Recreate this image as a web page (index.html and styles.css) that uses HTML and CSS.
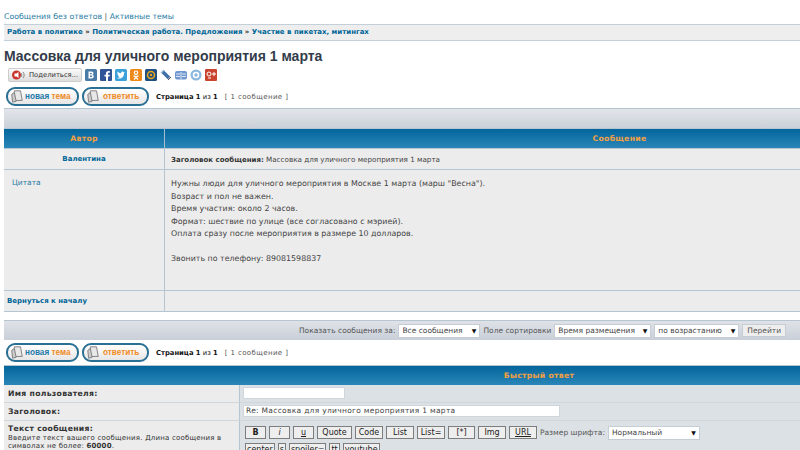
FILE: index.html
```html
<!DOCTYPE html>
<html lang="ru">
<head>
  <meta charset="UTF-8">
  <title>Массовка для уличного мероприятия 1 марта</title>
  <link rel="stylesheet" href="styles.css">
</head>
<body>
<div class="page">
  <div class="toplinks"><a href="#">Сообщения без ответов</a> | <a href="#">Активные темы</a></div>
  <div class="crumbs"><a href="#">Работа в политике</a> <span>»</span> <a href="#">Политическая работа. Предложения</a> <span>»</span> <a href="#">Участие в пикетах, митингах</a></div>
  <h1>Массовка для уличного мероприятия 1 марта</h1>

  <div class="share">
    <div class="share-btn">
      <svg width="16" height="12" viewBox="0 0 16 12"><ellipse cx="5.5" cy="6" rx="4.5" ry="4.5" fill="#c8342c"/><path d="M3.5 4.5h2l2-1.5v6l-2-1.500h-2z" fill="#fff"/><path d="M10 4c1 1 1 3 0 4M12 3c1.500 1.500 1.500 4.500 0 6" stroke="#888" fill="none"/></svg>
      <span>Поделиться...</span>
    </div>
    <svg class="soc" viewBox="0 0 12 12"><rect width="12" height="12" rx="1.500" fill="#4a7ba7"/><path d="M3.500 2.500h3c2.500 0 2.500 3 .8 3.300 2.200.3 2 3.700-.8 3.700h-3zM5 4v1.300h1.300c.8 0 .8-1.300 0-1.300zM5 6.500V8h1.500c1 0 1-1.500 0-1.500z" fill="#fff"/></svg>
    <svg class="soc" viewBox="0 0 12 12"><rect width="12" height="12" rx="1" fill="#2f5597"/><path d="M8 12V7.500h1.500L9.800 5.700H8V4.600c0-.6.2-.9.9-.9h.9V2.100H8.500C6.800 2.100 6 3 6 4.400v1.300H4.500v1.800H6V12z" fill="#fff"/></svg>
    <svg class="soc" viewBox="0 0 12 12"><rect width="12" height="12" rx="1.500" fill="#3ba1d8"/><path d="M2 9c3 1.500 7 0 7-5l1-1-1.300.2C8 2 6 2.500 6 4.200 4.500 4.200 3.500 3.500 2.500 2.500c-.5 1 0 2 .7 2.500l-.8-.2c0 1 .7 1.700 1.500 2l-.7.100c.3.700 1 1 1.600 1.100C4 8.600 3 9 2 9z" fill="#fff"/></svg>
    <svg class="soc" viewBox="0 0 12 12"><rect width="12" height="12" rx="1.500" fill="#ee8a1c"/><circle cx="6" cy="3.700" r="1.700" fill="none" stroke="#fff" stroke-width="1.200"/><path d="M3.500 6.800c1.500 1 3.500 1 5 0M6 7.500v1M6 8.500L4 10.500M6 8.500l2 2" stroke="#fff" stroke-width="1.200" fill="none"/></svg>
    <svg class="soc" viewBox="0 0 12 12"><rect width="12" height="12" rx="1.500" fill="#1e4f80"/><circle cx="6" cy="6" r="3.500" fill="none" stroke="#e8a41c" stroke-width="1.500"/><circle cx="6" cy="6" r="1.200" fill="#e8a41c"/></svg>
    <svg class="soc" viewBox="0 0 12 12"><path d="M2.500 2.500L9 9" stroke="#3f6fa8" stroke-width="3.500"/><path d="M1 4l3-3" stroke="#9db8d4" stroke-width="1.500"/><path d="M8 11l3-3" stroke="#555"/></svg>
    <svg class="soc" viewBox="0 0 12 12"><rect y="2" width="12" height="8.500" rx="2" fill="#6f96cf"/><path d="M1 5h4M1 7.500h4M7 5h4M7 7.500h4M6 3v7" stroke="#dfe8f4"/></svg>
    <svg class="soc" viewBox="0 0 12 12"><circle cx="6" cy="6" r="5.500" fill="#8ab8de"/><circle cx="6" cy="6" r="2.500" fill="none" stroke="#fff" stroke-width="1.500"/></svg>
    <svg class="soc" viewBox="0 0 12 12"><rect width="12" height="12" rx="1" fill="#c9452f"/><circle cx="4" cy="5" r="2" fill="none" stroke="#fff"/><path d="M3 9h3M9 3v4M7 5h4" stroke="#fff"/></svg>
  </div>

  <div class="actions">
    <a class="pill pill-new" href="#">
      <svg width="14" height="15" viewBox="0 0 16 15"><path d="M5 1h7l2 11H4z" fill="#e8e8e8" stroke="#777"/><path d="M2 5l3-2 2 10-4 1z" fill="#ccc" stroke="#777"/></svg>
      <span><b class="blue">новая</b> <b class="orange">тема</b></span>
    </a>
    <a class="pill pill-reply" href="#">
      <svg width="14" height="15" viewBox="0 0 16 15"><path d="M5 1h7l2 11H4z" fill="#e8e8e8" stroke="#777"/><path d="M2 5l3-2 2 10-4 1z" fill="#ccc" stroke="#777"/></svg>
      <b class="orange">ответить</b>
    </a>
    <span class="pages"><b>Страница 1</b> из <b>1</b></span>
    <span class="count">[ 1 сообщение ]</span>
  </div>

  <div class="band"></div>
  <div class="post">
    <div class="head head-left">Автор</div>
    <div class="head">Сообщение</div>
    <div class="cell author"><a href="#">Валентина</a></div>
    <div class="cell subject"><b>Заголовок сообщения:</b> Массовка для уличного мероприятия 1 марта</div>
    <div class="cell side"><a href="#">Цитата</a></div>
    <div class="cell body-text">
      <p>Нужны люди для уличного мероприятия в Москве 1 марта (марш "Весна").</p>
      <p>Возраст и пол не важен.</p>
      <p>Время участия: около 2 часов.</p>
      <p>Формат: шествие по улице (все согласовано с мэрией).</p>
      <p>Оплата сразу после мероприятия в размере 10 долларов.</p>
      <p>&nbsp;</p>
      <p>Звонить по телефону: 89081598837</p>
    </div>
    <div class="cell back"><a href="#">Вернуться к началу</a></div>
    <div class="cell empty"></div>
  </div>

  <div class="sortbar">
    <span>Показать сообщения за:</span>
    <span class="select sel-all">Все сообщения</span>
    <span>Поле сортировки</span>
    <span class="select sel-time">Время размещения</span>
    <span class="select sel-dir">по возрастанию</span>
    <span class="go">Перейти</span>
  </div>

  <div class="actions actions-low">
    <a class="pill pill-new" href="#">
      <svg width="14" height="15" viewBox="0 0 16 15"><path d="M5 1h7l2 11H4z" fill="#e8e8e8" stroke="#777"/><path d="M2 5l3-2 2 10-4 1z" fill="#ccc" stroke="#777"/></svg>
      <span><b class="blue">новая</b> <b class="orange">тема</b></span>
    </a>
    <a class="pill pill-reply" href="#">
      <svg width="14" height="15" viewBox="0 0 16 15"><path d="M5 1h7l2 11H4z" fill="#e8e8e8" stroke="#777"/><path d="M2 5l3-2 2 10-4 1z" fill="#ccc" stroke="#777"/></svg>
      <b class="orange">ответить</b>
    </a>
    <span class="pages"><b>Страница 1</b> из <b>1</b></span>
    <span class="count">[ 1 сообщение ]</span>
  </div>

  <div class="reply">
    <div class="reply-head">Быстрый ответ</div>
    <div class="label row-user"><b>Имя пользователя:</b></div>
    <div class="field row-user"><span class="input input-user"></span></div>
    <div class="label row-subj"><b>Заголовок:</b></div>
    <div class="field row-subj"><span class="input input-subj">Re: Массовка для уличного мероприятия 1 марта</span></div>
    <div class="label row-text">
      <b>Текст сообщения:</b>
      <small>Введите текст вашего сообщения. Длина сообщения в символах не более: <strong>60000</strong>.</small>
    </div>
    <div class="field row-text">
      <div class="tools">
        <span class="tool w-b"><b>B</b></span>
        <span class="tool w-b"><i>i</i></span>
        <span class="tool w-b"><u>u</u></span>
        <span class="tool w-q">Quote</span>
        <span class="tool">Code</span>
        <span class="tool">List</span>
        <span class="tool">List=</span>
        <span class="tool w-s">[*]</span>
        <span class="tool">Img</span>
        <span class="tool"><u>URL</u></span>
        <span class="size-label">Размер шрифта:</span>
        <span class="select sel-size">Нормальный</span>
      </div>
      <div class="tools">
        <span class="tool tiny">center</span>
        <span class="tool tiny">s</span>
        <span class="tool tiny">spoiler=</span>
        <span class="tool tiny">tt</span>
        <span class="tool tiny">youtube</span>
      </div>
    </div>
  </div>
</div>
</body>
</html>
```

FILE: styles.css
```css
html, body {
  margin: 0;
  height: 450px;
  overflow: hidden;
}
body {
  background: #fff;
  padding-left: 4px;
  font-family: "DejaVu Sans", Verdana, sans-serif;
  font-size: 8px;
  color: #333;
}
/* the forum table is wider than the window and runs off the right edge */
.page {
  width: 1070px;
}
a {
  color: #006597;
  text-decoration: none;
}
p {
  margin: 0;
}
.toplinks {
  padding-top: 11px;
  height: 13px;
  font-size: 7.8px;
  line-height: 11px;
  color: #555;
}
.toplinks a {
  color: #2a7ba3;
}
.crumbs {
  height: 15px;
  line-height: 15px;
  padding-left: 3px;
  background: #eee;
  border-top: 1px solid #c3d0da;
  border-bottom: 1px solid #c3d0da;
  font-size: 7px;
  font-weight: bold;
  white-space: nowrap;
}
.crumbs span {
  color: #333;
}
h1 {
  margin: 6px 0 0;
  height: 21px;
  font-family: "Liberation Sans", Arial, sans-serif;
  font-size: 14px;
  line-height: 18px;
  color: #333c4a;
}
.share {
  display: flex;
  align-items: center;
  gap: 3px;
  height: 13px;
  padding-left: 4px;
}
.share-btn {
  display: flex;
  align-items: center;
  gap: 2px;
  width: 70px;
  height: 12px;
  padding-left: 2px;
  background: linear-gradient(#fafafa, #ddd);
  border: 1px solid #ccc;
  border-radius: 2px;
  font-size: 6.8px;
  color: #333;
  white-space: nowrap;
}
.soc {
  width: 12px;
  height: 12px;
}
.actions {
  display: flex;
  align-items: center;
  height: 19px;
  margin-top: 6px;
  padding-left: 2px;
}
.actions-low {
  margin-top: 3px;
}
.pill {
  display: flex;
  align-items: center;
  gap: 1px;
  box-sizing: border-box;
  height: 19px;
  margin-right: 3px;
  padding-left: 2px;
  border: 2px solid #2a6f94;
  border-radius: 9px;
  background: linear-gradient(#fff, #e6e6e6);
  font-family: "Liberation Sans", Arial, sans-serif;
  font-size: 8.2px;
  white-space: nowrap;
}
.pill-new {
  width: 73px;
}
.pill-reply {
  width: 67px;
}
.pill-reply svg {
  margin-right: 2px;
}
.pill .blue {
  color: #1f7aa8;
}
.pill .orange {
  color: #f08a24;
}
.pages {
  margin-left: 4px;
  font-size: 6.8px;
  color: #111;
  white-space: nowrap;
}
.count {
  margin-left: 7px;
  font-size: 7px;
  color: #555;
  letter-spacing: .4px;
  white-space: nowrap;
}
.band {
  height: 19px;
  margin-top: 2px;
  background: linear-gradient(#e2e5ea, #cbd1d9);
  border-top: 1px solid #b5c5d1;
  border-bottom: 1px solid #b5c5d1;
}
.post {
  display: grid;
  grid-template-columns: 161px 1fr;
  grid-template-rows: 19px 21px 121px 21px;
  border-bottom: 1px solid #b5c5d1;
}
.head, .reply-head {
  background: linear-gradient(#03659b, #2a86b8);
  color: #f2a043;
  font-size: 7.7px;
  font-weight: bold;
  text-align: center;
  line-height: 20px;
  letter-spacing: .3px;
}
.head-left {
  border-right: 1px solid #a8bdcb;
}
.cell {
  background: #ececec;
  border-top: 1px solid #b5c5d1;
  box-sizing: border-box;
}
.author, .side, .back {
  border-right: 1px solid #b5c5d1;
}
.author {
  text-align: center;
  font-weight: bold;
  font-size: 7px;
  line-height: 21px;
}
.subject {
  padding-left: 6px;
  font-size: 7.2px;
  line-height: 21px;
  color: #444;
}
.subject b {
  font-size: 7px;
  color: #333;
}
.side {
  padding: 8px 8px;
  font-size: 7.5px;
}
.side a {
  color: #2a7ba3;
}
.body-text {
  padding: 8px 6px;
  font-size: 7.9px;
  line-height: 12.500px;
  color: #444;
}
.back {
  padding-left: 3px;
  font-size: 7px;
  font-weight: bold;
  line-height: 20px;
}
.sortbar {
  display: flex;
  justify-content: center;
  align-items: center;
  gap: 3px;
  height: 19px;
  margin-top: 8px;
  padding-left: 7px;
  background: linear-gradient(#dfe3e8, #c9cfd8);
  border-top: 1px solid #b5c5d1;
  font-size: 7.5px;
  color: #555;
  white-space: nowrap;
}
.select {
  display: inline-block;
  box-sizing: border-box;
  position: relative;
  height: 14px;
  padding-left: 3px;
  background: #fff;
  border: 1px solid #c6cdd4;
  font-size: 7.5px;
  line-height: 12px;
  color: #444;
}
.select::after {
  content: "▼";
  position: absolute;
  right: 3px;
  top: 0;
  font-size: 6px;
  color: #111;
}
.sel-all {
  width: 82px;
}
.sel-time {
  width: 97px;
}
.sel-dir {
  width: 85px;
}
.sel-size {
  width: 92px;
}
.go {
  box-sizing: border-box;
  height: 13px;
  padding: 0 4px;
  background: #eee;
  border: 1px solid #c6cdd4;
  font-size: 7.5px;
  line-height: 11px;
}
.reply {
  display: grid;
  grid-template-columns: 236px 1fr;
  grid-template-rows: 19px 18px 18px 1fr;
  margin-top: 3px;
  border-top: 1px solid #b5c5d1;
}
.reply-head {
  grid-column: 1 / 3;
}
.label {
  box-sizing: border-box;
  padding-left: 4px;
  background: #ececec;
  border-bottom: 1px solid #cfd6dc;
  border-right: 1px solid #b5c5d1;
  font-size: 7.7px;
  line-height: 17px;
  color: #333;
  letter-spacing: .3px;
}
.label small {
  display: block;
  width: 222px;
  font-size: 7px;
  line-height: 8px;
  letter-spacing: .2px;
}
.row-text.label {
  line-height: 10px;
  padding-top: 3px;
  height: 40px;
}
.field {
  box-sizing: border-box;
  padding-left: 3px;
  background: #dce1e6;
  border-bottom: 1px solid #cfd6dc;
}
.input {
  display: block;
  box-sizing: border-box;
  height: 12px;
  margin-top: 2px;
  padding-left: 2px;
  background: #fff;
  border: 1px solid #cfd6dc;
  font-size: 7.5px;
  line-height: 10px;
  color: #444;
  letter-spacing: .3px;
  white-space: nowrap;
}
.input-user {
  width: 102px;
}
.input-subj {
  width: 317px;
}
.tools {
  display: flex;
  align-items: center;
  gap: 3px;
  height: 15px;
  margin: 4px 0 0 2px;
  white-space: nowrap;
}
.tools + .tools {
  margin-top: 2px;
}
.tool {
  box-sizing: border-box;
  width: 28px;
  height: 13px;
  background: #eee;
  border: 1px solid #7d7d7d;
  font-size: 8px;
  line-height: 11px;
  text-align: center;
  color: #222;
}
.w-b {
  width: 21px;
}
.w-q {
  width: 35px;
}
.w-s {
  width: 27px;
}
.tiny {
  width: auto;
  padding: 0 1px;
}
.size-label {
  font-size: 7.500px;
  color: #555;
}
```
